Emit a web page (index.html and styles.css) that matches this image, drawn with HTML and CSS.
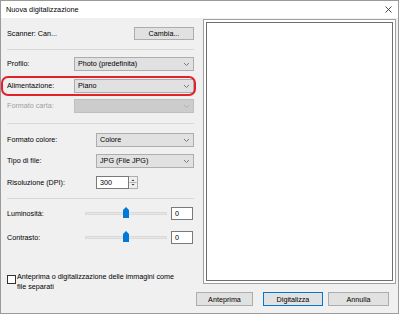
FILE: index.html
```html
<!DOCTYPE html>
<html lang="it">
  <head>
    <meta charset="UTF-8" />
    <title>Nuova digitalizzazione</title>
    <link rel="stylesheet" href="styles.css">
  </head>
  <body>
    <div class="window">
      <div class="titlebar">
        <span>Nuova digitalizzazione</span>
        <svg class="close" viewBox="0 0 7 7"><path d="M0.5 0.5L6.5 6.5M6.5 0.5L0.5 6.5" /></svg>
      </div>

      <div class="body">
        <div class="main">
          <div class="settings">
            <div class="row scanner-row">
              <span>Scanner: Can...</span>
              <button class="btn btn-change">Cambia...</button>
            </div>

            <div class="sep sep-1"></div>

            <div class="row row-profile">
              <span class="label">Profilo:</span>
              <div class="select">Photo (predefinita)<svg class="chevron" viewBox="0 0 5 3"><path d="M0 0L2.5 2.5L5 0" /></svg></div>
            </div>

            <div class="row row-source highlight">
              <span class="label">Alimentazione:</span>
              <div class="select">Piano<svg class="chevron" viewBox="0 0 5 3"><path d="M0 0L2.5 2.5L5 0" /></svg></div>
            </div>

            <div class="row row-paper disabled">
              <span class="label">Formato carta:</span>
              <div class="select"><svg class="chevron" viewBox="0 0 5 3"><path d="M0 0L2.5 2.5L5 0" /></svg></div>
            </div>

            <div class="sep sep-2"></div>

            <div class="row wide row-color">
              <span class="label">Formato colore:</span>
              <div class="select">Colore<svg class="chevron" viewBox="0 0 5 3"><path d="M0 0L2.5 2.5L5 0" /></svg></div>
            </div>

            <div class="row wide row-type">
              <span class="label">Tipo di file:</span>
              <div class="select">JPG (File JPG)<svg class="chevron" viewBox="0 0 5 3"><path d="M0 0L2.5 2.5L5 0" /></svg></div>
            </div>

            <div class="row wide row-res">
              <span class="label">Risoluzione (DPI):</span>
              <div class="spin">
                <div class="spin-input">300</div>
                <div class="spin-buttons">
                  <svg viewBox="0 0 7 11"><path class="arrow" d="M2 4L3.5 2.5L5 4Z" /><path class="divider" d="M0 5.5H7" /><path class="arrow" d="M2 7L3.5 8.5L5 7Z" /></svg>
                </div>
              </div>
            </div>

            <div class="sep sep-3"></div>

            <div class="row slider-row row-bright">
              <span class="label">Luminosità:</span>
              <div class="slider">
                <div class="track"></div>
                <svg class="thumb" viewBox="0 0 6 11"><path d="M0 3L3 0L6 3V11H0Z" /></svg>
              </div>
              <div class="value">0</div>
            </div>

            <div class="row slider-row row-contrast">
              <span class="label">Contrasto:</span>
              <div class="slider">
                <div class="track"></div>
                <svg class="thumb" viewBox="0 0 6 11"><path d="M0 3L3 0L6 3V11H0Z" /></svg>
              </div>
              <div class="value">0</div>
            </div>

            <div class="check-row">
              <span class="checkbox"></span>
              <span class="check-label">Anteprima o digitalizzazione delle immagini come<br />file separati</span>
            </div>
          </div>

          <div class="preview-col">
            <div class="preview-frame">
              <div class="preview"></div>
            </div>
          </div>
        </div>

        <div class="actions">
          <button class="btn btn-preview">Anteprima</button>
          <button class="btn btn-default">Digitalizza</button>
          <button class="btn btn-cancel">Annulla</button>
        </div>
      </div>
    </div>
  </body>
</html>
```

FILE: styles.css
```css
* {
  box-sizing: border-box;
}

body {
  margin: 0;
  font-family: "Liberation Sans", Arial, sans-serif;
  font-size: 7.2px;
  color: #000;
  background-color: #fff;
}

.window {
  width: 399px;
  height: 314px;
  border: 1px solid #9a9a9a;
  background-color: #f0f0f0;
  display: flex;
  flex-direction: column;
}

/* Title bar */
.titlebar {
  height: 17px;
  background-color: #fff;
  display: flex;
  align-items: center;
  justify-content: space-between;
  padding: 0 6px 0 5px;
  font-size: 7.3px;
}

.close {
  width: 7px;
  height: 7px;
}

.close path {
  stroke: #333;
  stroke-width: 0.9;
  fill: none;
}

.body {
  flex: 1;
  display: flex;
  flex-direction: column;
}

.main {
  height: 274px;
  display: flex;
}

/* Settings column */
.settings {
  width: 199px;
  padding: 0 6px;
  display: flex;
  flex-direction: column;
}

.row {
  display: flex;
  align-items: center;
  height: 14px;
  line-height: 1;
}

.label {
  width: 67px;
  flex-shrink: 0;
}

.wide .label {
  width: 89px;
}

.scanner-row {
  margin-top: 9px;
  height: 13px;
  justify-content: space-between;
}

.sep {
  height: 1px;
  background-color: #d7d7d7;
}

.sep-1 { margin-top: 9px; }
.row-profile { margin-top: 7px; }
.row-source { margin-top: 8px; }
.row-paper { margin-top: 6px; }
.sep-2 { margin-top: 10px; }
.row-color { margin-top: 9px; }
.row-type { margin-top: 7px; }
.row-res { margin-top: 8px; height: 13px; }
.sep-3 { margin-top: 9px; }
.row-bright { margin-top: 8px; }
.row-contrast { margin-top: 11px; }

.select {
  flex: 1;
  height: 14px;
  display: flex;
  align-items: center;
  justify-content: space-between;
  padding: 0 4px 0 3px;
  background-color: #e1e1e1;
  border: 1px solid #adadad;
}

.chevron {
  width: 5px;
  height: 3px;
  margin-left: auto;
}

.chevron path {
  stroke: #606060;
  stroke-width: 0.8;
  fill: none;
}

.disabled .label {
  color: #a0a0a0;
}

.disabled .select {
  background-color: #cccccc;
  border-color: #bfbfbf;
}

.disabled .chevron path {
  stroke: #a8a8a8;
}

/* Red annotation around Alimentazione */
.highlight {
  position: relative;
}

.highlight::after {
  content: "";
  position: absolute;
  top: -3px;
  bottom: -3px;
  left: -6px;
  right: -2px;
  border: 2px solid #e4202b;
  border-radius: 7px;
}

/* Resolution spin box */
.spin {
  display: flex;
  height: 13px;
}

.spin-input {
  width: 33px;
  display: flex;
  align-items: center;
  padding-left: 3px;
  background-color: #fff;
  border: 1px solid #7a7a7a;
}

.spin-buttons {
  width: 9px;
  background-color: #f0f0f0;
  border: 1px solid #adadad;
  border-left: none;
}

.spin-buttons svg {
  display: block;
  width: 8px;
  height: 11px;
}

.spin-buttons .arrow {
  fill: #333;
}

.spin-buttons .divider {
  stroke: #adadad;
  stroke-width: 1;
}

/* Sliders */
.slider-row {
  height: 13px;
}

.slider-row .label {
  width: 78px;
}

.slider {
  position: relative;
  width: 82px;
  height: 13px;
  display: flex;
  align-items: center;
  margin-right: 4px;
}

.track {
  width: 100%;
  height: 3px;
  background-color: #e7e7e7;
  border: 1px solid #d9d9d9;
}

.thumb {
  position: absolute;
  left: 38px;
  top: 0;
  width: 6px;
  height: 11px;
}

.thumb path {
  fill: #0078d7;
}

.value {
  width: 22px;
  height: 13px;
  display: flex;
  align-items: center;
  padding-left: 3px;
  background-color: #fff;
  border: 1px solid #7a7a7a;
}

/* Checkbox */
.check-row {
  margin-top: 28px;
  display: flex;
  align-items: flex-start;
}

.checkbox {
  width: 9px;
  height: 9px;
  margin-top: 3px;
  margin-right: 1px;
  flex-shrink: 0;
  background-color: #fff;
  border: 1px solid #333;
}

.check-label {
  line-height: 10px;
}

/* Preview */
.preview-col {
  flex: 1;
  padding: 1px 2px 0 3px;
}

.preview-frame {
  height: 265px;
  padding: 2px;
  display: flex;
  background-color: #fff;
  border: 1px solid #a0a0a0;
}

.preview {
  flex: 1;
  background-color: #fff;
  border: 1px solid #6e6e6e;
}

/* Buttons */
.btn {
  height: 14px;
  padding: 0;
  font: inherit;
  color: #000;
  background-color: #e1e1e1;
  border: 1px solid #adadad;
}

.btn-change {
  width: 60px;
  height: 13px;
}

.actions {
  display: flex;
  justify-content: flex-end;
  padding-right: 9px;
}

.btn-preview {
  width: 57px;
  margin-right: 10px;
}

.btn-default {
  width: 60px;
  margin-right: 5px;
  border-color: #0078d7;
}

.btn-cancel {
  width: 61px;
}
```
